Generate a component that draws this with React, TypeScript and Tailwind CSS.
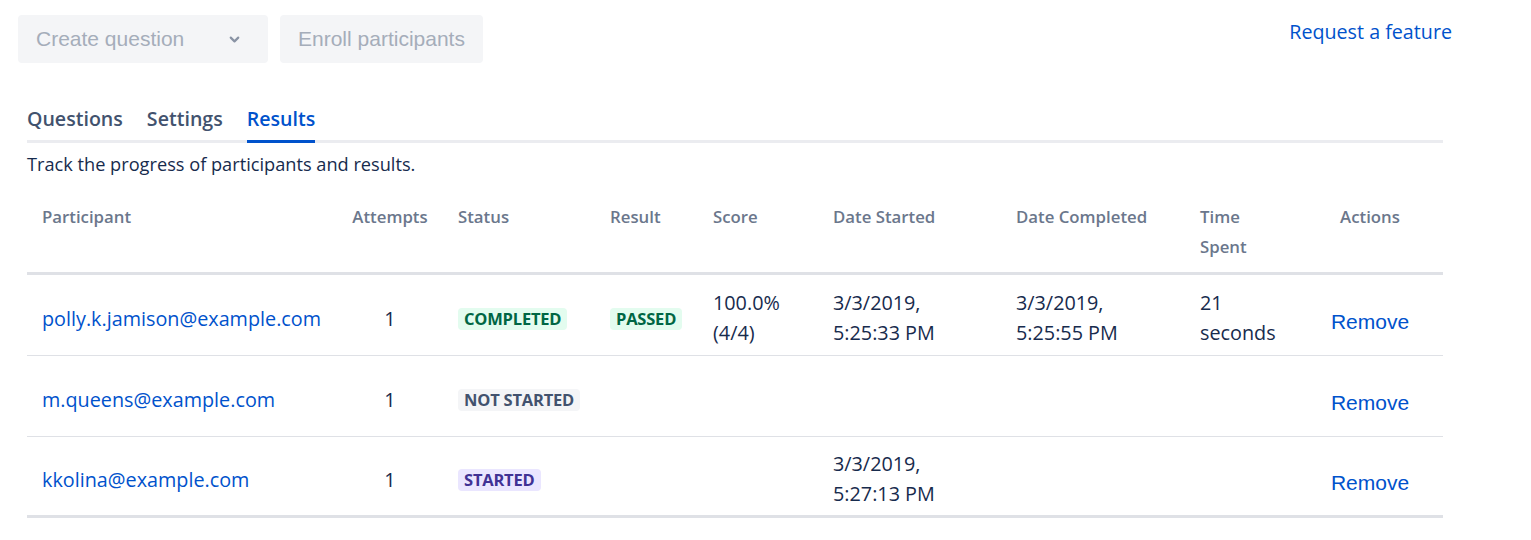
import { ChevronDown } from "lucide-react";

type Row = {
  email: string;
  attempts: number;
  status: "COMPLETED" | "NOT STARTED" | "STARTED";
  result?: string;
  score?: [string, string];
  started?: [string, string];
  completed?: [string, string];
  spent?: [string, string];
};

const rows: Row[] = [
  {
    email: "polly.k.jamison@example.com",
    attempts: 1,
    status: "COMPLETED",
    result: "PASSED",
    score: ["100.0%", "(4/4)"],
    started: ["3/3/2019,", "5:25:33 PM"],
    completed: ["3/3/2019,", "5:25:55 PM"],
    spent: ["21", "seconds"],
  },
  { email: "m.queens@example.com", attempts: 1, status: "NOT STARTED" },
  {
    email: "kkolina@example.com",
    attempts: 1,
    status: "STARTED",
    started: ["3/3/2019,", "5:27:13 PM"],
  },
];

const STATUS_STYLES = {
  COMPLETED: "bg-[#e3fcef] text-[#006644]",
  "NOT STARTED": "bg-[#f4f5f7] text-[#42526e]",
  STARTED: "bg-[#eae6ff] text-[#403294]",
};

const GRID =
  "grid grid-cols-[310px_106px_152px_103px_120px_183px_184px_113px_144px]";

function Lozenge({ text, cls }: { text: string; cls: string }) {
  return (
    <span
      className={`inline-block rounded-[4px] px-[6px] h-[22px] leading-[22px] text-[16.5px] font-bold tracking-[-0.2px] ${cls}`}
    >
      {text}
    </span>
  );
}

function Lines({ value }: { value?: [string, string] }) {
  if (!value) return null;
  return (
    <>
      {value[0]}
      <br />
      {value[1]}
    </>
  );
}

export default function App() {
  return (
    <div
      className="w-[1531px] h-[540px] bg-white text-[#172b4d] overflow-hidden"
      style={{ fontFamily: '"Open Sans", "Noto Sans", sans-serif' }}
    >
      {/* TOP BAR */}
      <div className="flex items-start pt-[15px] pl-[18px] pr-[79px]">
        <div
          className="flex gap-[12px]"
          style={{ fontFamily: '"Liberation Sans", Arial, sans-serif' }}
        >
          <div className="flex items-center justify-between w-[250px] h-[48px] rounded-[4px] bg-[#f4f5f7] pl-[18px] pr-[26px] text-[21px] text-[#a5adba]">
            Create question
            <ChevronDown className="w-[15px] h-[15px] text-[#8993a4]" strokeWidth={3.5} />
          </div>
          <div className="flex items-center h-[48px] rounded-[4px] bg-[#f4f5f7] px-[18px] text-[21px] text-[#a5adba]">
            Enroll participants
          </div>
        </div>
        <a className="ml-auto mt-[2px] text-[19.7px] text-[#0052cc]">Request a feature</a>
      </div>

      {/* TABS */}
      <div className="ml-[27px] w-[1416px] mt-[41px]">
        <div className="flex gap-[24px] border-b-[3px] border-[#ebecf0] text-[19.6px] font-semibold text-[#42526e]">
          <div className="pb-[7px]">Questions</div>
          <div className="pb-[7px]">Settings</div>
          <div className="pb-[7px] -mb-[3px] border-b-[3px] border-[#0052cc] text-[#0052cc]">
            Results
          </div>
        </div>
        <p className="mt-[8px] text-[18.2px] leading-[26px]">
          Track the progress of participants and results.
        </p>

        {/* TABLE */}
        <div className="mt-[17px]">
          <div
            className={`${GRID} border-b-[3px] border-[#dfe1e6] text-[16.8px] font-semibold text-[#6b778c] leading-[30px] pt-[8px] pb-[10px]`}
          >
            <div className="pl-[15px]">Participant</div>
            <div className="text-center">Attempts</div>
            <div className="pl-[15px]">Status</div>
            <div className="pl-[15px]">Result</div>
            <div className="pl-[15px]">Score</div>
            <div className="pl-[15px]">Date Started</div>
            <div className="pl-[15px]">Date Completed</div>
            <div className="pl-[15px]">
              Time
              <br />
              Spent
            </div>
            <div className="text-center">Actions</div>
          </div>

          {rows.map((r, i) => (
            <div
              key={r.email}
              className={`${GRID} h-[81px] pt-[5px] items-center text-[19.8px] leading-[30px] ${
                i === rows.length - 1
                  ? "border-b-[3px] border-[#dfe1e6]"
                  : "border-b border-[#dfe1e6]"
              }`}
            >
              <div className="pl-[15px] pt-[3px]">
                <a className="text-[#0052cc]">{r.email}</a>
              </div>
              <div className="text-center pt-[3px]">{r.attempts}</div>
              <div className="pl-[15px]">
                <Lozenge text={r.status} cls={STATUS_STYLES[r.status]} />
              </div>
              <div className="pl-[15px]">
                {r.result && <Lozenge text={r.result} cls="bg-[#e3fcef] text-[#006644]" />}
              </div>
              <div className="pl-[15px]">
                <Lines value={r.score} />
              </div>
              <div className="pl-[15px]">
                <Lines value={r.started} />
              </div>
              <div className="pl-[15px]">
                <Lines value={r.completed} />
              </div>
              <div className="pl-[15px]">
                <Lines value={r.spent} />
              </div>
              <div
                className="text-center pt-[9px] text-[21px] text-[#0052cc]"
                style={{ fontFamily: '"Liberation Sans", Arial, sans-serif' }}
              >
                Remove
              </div>
            </div>
          ))}
        </div>
      </div>
    </div>
  );
}
